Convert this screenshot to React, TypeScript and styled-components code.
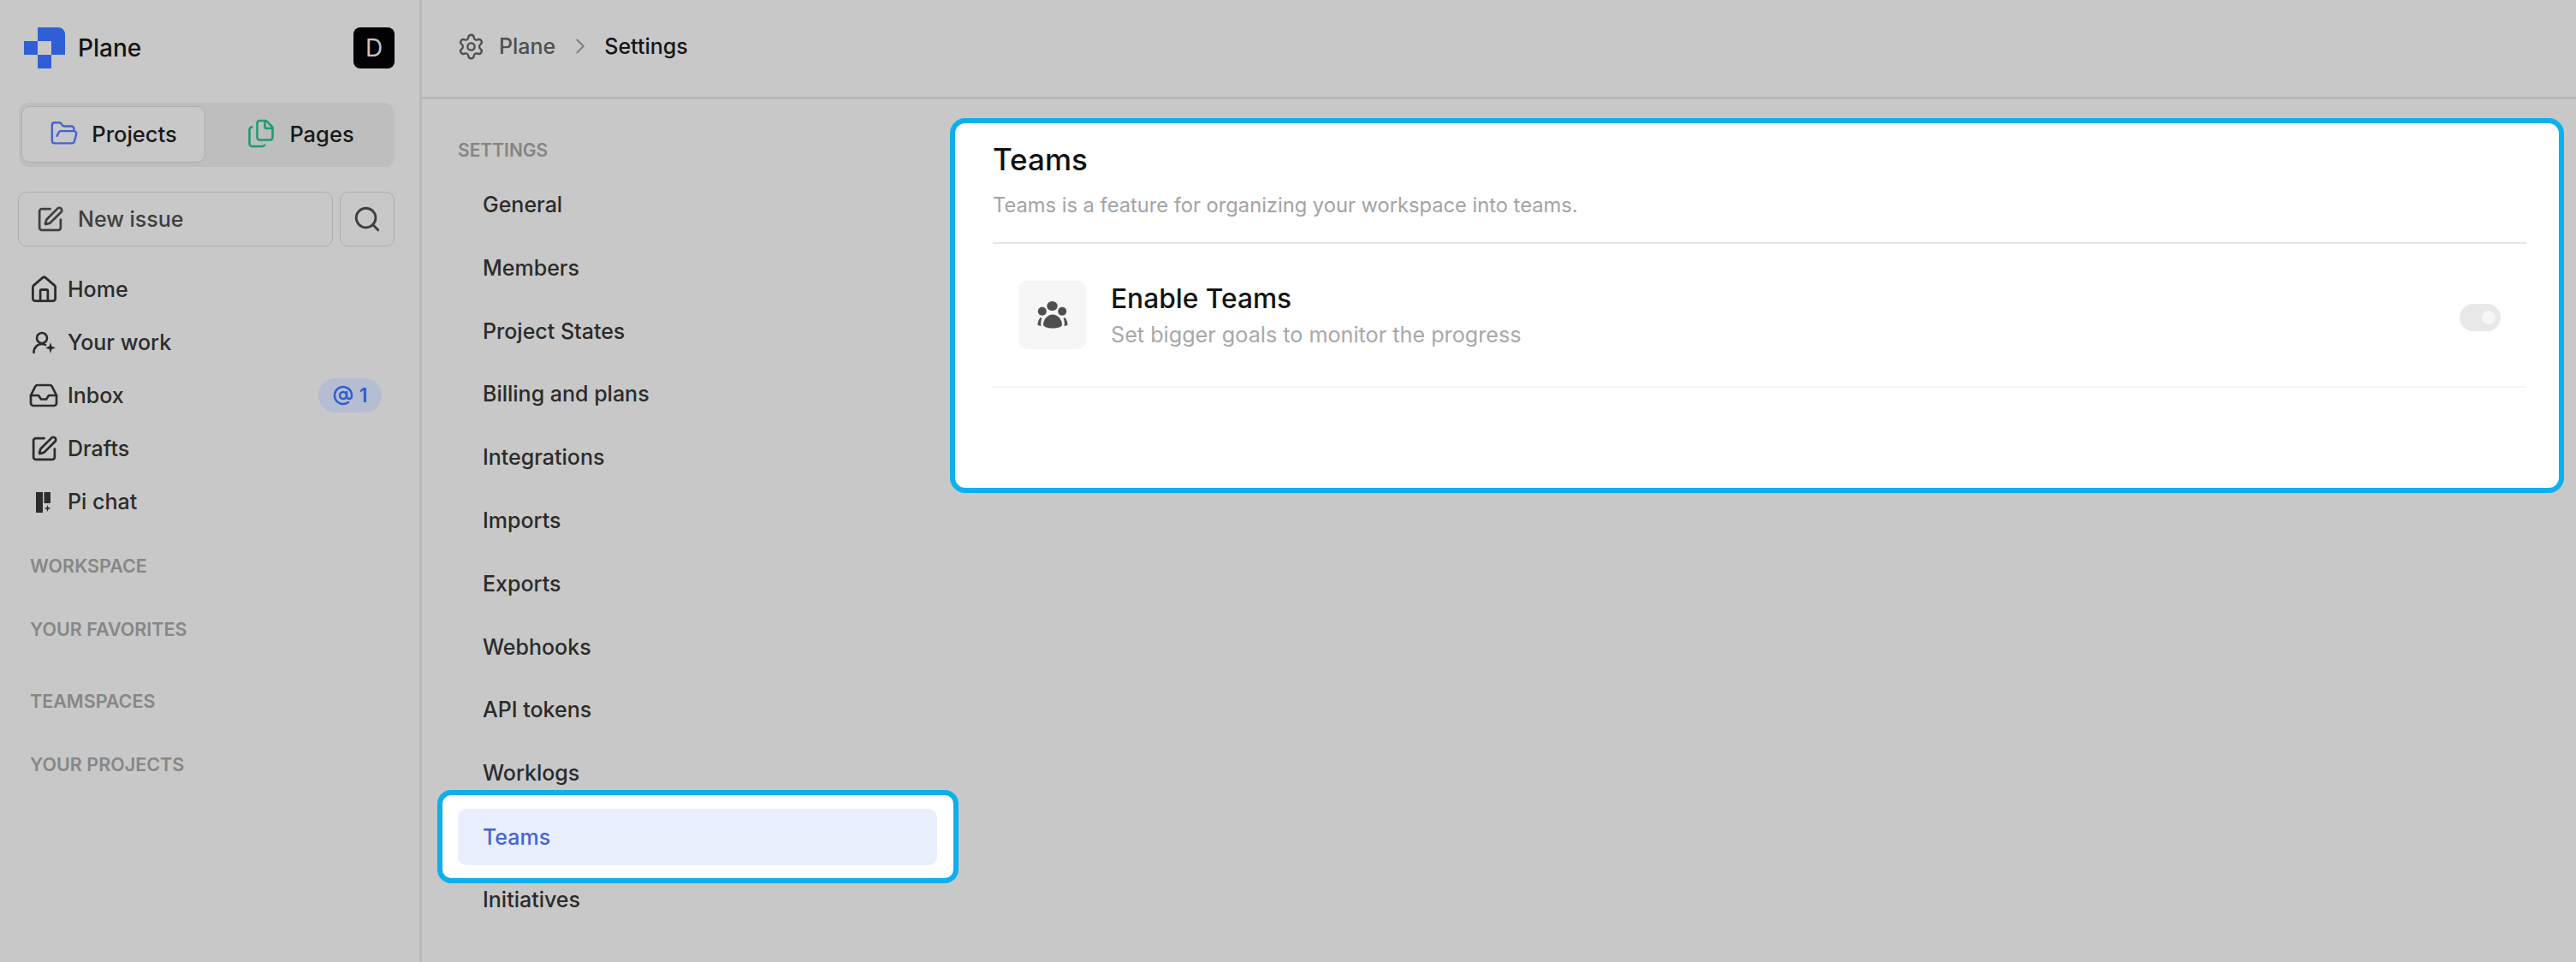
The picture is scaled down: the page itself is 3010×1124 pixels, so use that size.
import React from "react";
import styled, { createGlobalStyle } from "styled-components";
import { FolderOpen, Files, Search, SquarePen, House, Inbox, Settings, ChevronRight, AtSign } from "lucide-react";

const Global = createGlobalStyle`
  html, body { margin: 0; padding: 0; background: #c8c8c8; }
  body { font-family: Inter, "Liberation Sans", sans-serif; overflow: hidden; }
  * { box-sizing: border-box; }
  svg { flex-shrink: 0; }
`;

const Page = styled.div`
  display: flex;
  width: 3010px;
  height: 1124px;
  background: #c8c8c8;
  color: #1d1d1d;
  overflow: hidden;
`;

const Sidebar = styled.aside`
  flex: 0 0 493px;
  border-right: 3px solid #b9b9b9;
  padding-top: 32px;
  display: flex;
  flex-direction: column;
`;

const SidebarHeader = styled.div`
  display: flex;
  align-items: center;
  justify-content: space-between;
  height: 48px;
  padding: 0 29px 0 28px;
`;

const Brand = styled.div`
  display: flex;
  align-items: center;
  gap: 15px;
  font-size: 28px;
  font-weight: 500;
  color: #141414;
`;

const Avatar = styled.div`
  width: 48px;
  height: 48px;
  border-radius: 8px;
  background: #020205;
  color: #c4c4c4;
  font-size: 28px;
  display: flex;
  align-items: center;
  justify-content: center;
`;

const Tabs = styled.div`
  display: flex;
  height: 75px;
  margin: 40px 29px 0 22px;
  padding: 4px 0 5px 3px;
  border-radius: 12px;
  background: #bebebe;
`;

const Tab = styled.div<{ $active?: boolean }>`
  flex: ${(p) => (p.$active ? "0 0 215px" : "1")};
  display: flex;
  align-items: center;
  justify-content: center;
  gap: 15px;
  padding-bottom: 2px;
  font-size: 25.5px;
  font-weight: 500;
  color: #191919;
  border-radius: 10px;
  background: ${(p) => (p.$active ? "#c8c8c8" : "transparent")};
  border: ${(p) => (p.$active ? "1.5px solid #aeaeae" : "none")};
`;

const Actions = styled.div`
  display: flex;
  gap: 8px;
  margin-top: 29px;
  padding: 0 29px 0 21px;
`;

const ActionButton = styled.div<{ $square?: boolean }>`
  height: 64px;
  display: flex;
  align-items: center;
  gap: 16px;
  border: 1.5px solid #adadad;
  border-radius: 10px;
  color: #3f3f3f;
  font-size: 25px;
  font-weight: 500;
  ${(p) => (p.$square ? "flex: 0 0 64px; justify-content: center;" : "flex: 1; padding-left: 20px;")}
`;

const Nav = styled.nav`
  display: flex;
  flex-direction: column;
  margin-top: 19px;
`;

const NavItem = styled.div`
  height: 62px;
  display: flex;
  align-items: center;
  gap: 13px;
  padding: 0 44px 0 36px;
  font-size: 25px;
  font-weight: 450;
  color: #2c2c2c;
`;

const NavIcon = styled.span`
  flex: 0 0 30px;
  min-width: 0;
  display: flex;
  align-items: center;
  justify-content: center;
`;

const Badge = styled.span`
  margin-left: auto;
  height: 40px;
  width: 74px;
  display: flex;
  align-items: center;
  justify-content: center;
  gap: 7px;
  border-radius: 20px;
  background: #b5bdd2;
  color: #2f5fd0;
  font-size: 23px;
  font-weight: 600;
`;

const Groups = styled.div`
  display: flex;
  flex-direction: column;
  padding: 0 35px;
  margin-top: 31px;
`;

const GroupLabel = styled.div<{ $gap: number }>`
  height: 26px;
  line-height: 26px;
  margin-bottom: ${(p) => p.$gap}px;
  font-size: 21.500px;
  font-weight: 600;
  color: #878787;
`;

const Main = styled.main`
  flex: 1;
  min-width: 0;
  display: flex;
  flex-direction: column;
`;

const TopBar = styled.header`
  flex: 0 0 116px;
  border-bottom: 3px solid #b9b9b9;
  display: flex;
  align-items: center;
  padding: 0 0 5px 41px;
  font-size: 25px;
  font-weight: 450;
`;

const Crumb = styled.span<{ $current?: boolean }>`
  color: ${(p) => (p.$current ? "#161616" : "#505050")};
`;

const CrumbGear = styled.span`
  display: flex;
  margin-right: 16px;
  color: #505050;
`;

const CrumbChevron = styled.span`
  display: flex;
  margin: 0 13px 0 14px;
  color: #808080;
`;

const Body = styled.div`
  flex: 1;
  display: flex;
  min-height: 0;
`;

const SettingsNav = styled.div`
  flex: 0 0 617px;
  min-width: 0;
  display: flex;
  flex-direction: column;
  padding: 46px 0 0 42px;
`;

const SettingsTitle = styled.div`
  height: 28px;
  line-height: 28px;
  font-size: 21px;
  font-weight: 600;
  color: #858585;
  margin-bottom: 16px;
`;

const SettingsItem = styled.div<{ $active?: boolean }>`
  height: 66px;
  width: 560px;
  flex: 0 0 66px;
  margin-bottom: ${(p) => (p.$active ? 0 : "7.8px")};
  padding-left: 29px;
  display: flex;
  align-items: center;
  border-radius: 10px;
  font-size: 25px;
  font-weight: 450;
  color: ${(p) => (p.$active ? "#4563d8" : "#2b2b2b")};
  background: ${(p) => (p.$active ? "#e9effd" : "transparent")};
`;

/* Annotation frame drawn around the active row; negative margins keep the row in the list rhythm. */
const ActiveFrame = styled.div`
  flex: 0 0 auto;
  width: 609px;
  margin: -21px 0 -14.200px -24px;
  padding: 16px 19px 15px 18px;
  background: #fff;
  border: 6px solid #0bb0ee;
  border-radius: 16px;
`;

const Card = styled.section`
  margin-top: 22px;
  width: 1886px;
  height: 438px;
  flex: 0 0 auto;
  background: #fff;
  border: 6px solid #0bb0ee;
  border-radius: 18px;
  padding: 20px 38px 0 44px;
`;

const Title = styled.h1`
  margin: 0;
  font-size: 35px;
  line-height: 44px;
  font-weight: 500;
  color: #111;
`;

const Description = styled.p`
  margin: 14px 0 0;
  font-size: 23.700px;
  line-height: 36px;
  color: #a3a3a3;
  padding-bottom: 25px;
  border-bottom: 2px solid #e5e5e5;
`;

const FeatureRow = styled.div`
  display: flex;
  align-items: center;
  height: 168px;
  padding: 0 30px 0 30px;
  border-bottom: 2px solid #f5f5f5;
`;

const FeatureIcon = styled.div`
  flex: 0 0 79px;
  height: 80px;
  display: flex;
  align-items: center;
  justify-content: center;
  border-radius: 10px;
  background: #f6f6f6;
`;

const FeatureText = styled.div`
  flex: 1;
  margin-left: 29px;
`;

const FeatureName = styled.div`
  font-size: 31.700px;
  line-height: 42px;
  font-weight: 500;
  color: #141414;
`;

const FeatureHint = styled.div`
  margin-top: 3px;
  font-size: 25.200px;
  line-height: 36px;
  color: #a8a8a8;
`;

const Toggle = styled.div`
  width: 48px;
  height: 32px;
  margin-top: 5px;
  border-radius: 16px;
  background: #e8e8e8;
  display: flex;
  align-items: center;
  justify-content: flex-end;
  padding-right: 6px;
`;

const Knob = styled.span`
  width: 16px;
  height: 16px;
  border-radius: 50%;
  background: #f6f6f6;
`;

const Logo = () => (
  <svg width="48" height="48" viewBox="0 0 48 48" fill="#2f5fd6">
    <path d="M16 0h24a8 8 0 0 1 8 8v24H32V16H16z" />
    <rect x="0" y="16" width="16" height="16" />
    <rect x="16" y="32" width="16" height="16" />
  </svg>
);

const YourWorkIcon = () => (
  <svg width="27" height="26" viewBox="0 0 27 26" fill="none" stroke="#2c2c2c" strokeWidth="2.600" strokeLinecap="round">
    <circle cx="11" cy="8" r="6" />
    <path d="M1.500 25c0-6 4-10 9.500-10 2 0 3 .3 4 1" />
    <path d="M21 13l1.500 4.500L27 19.500l-4.500 1.500L21 26l-1.500-5-4.500-1.500 4.500-2z" fill="#2c2c2c" stroke="none" />
  </svg>
);

const PiIcon = () => (
  <svg width="20" height="25" viewBox="0 0 20 25" fill="#2c2c2c">
    <rect x="1" y="1" width="8" height="24" />
    <path d="M10.500 1H18v12a1 1 0 0 1-1 1h-6.500z" />
    <path d="M14.500 16l1 3 3 1-3 1-1 3-1-3-3-1 3-1z" />
  </svg>
);

const TeamIcon = () => (
  <svg width="36" height="32" viewBox="0 0 36 32" fill="#4f4f4f">
    <ellipse cx="17.500" cy="5.500" rx="6.200" ry="5.500" />
    <circle cx="5.800" cy="11.700" r="5" />
    <circle cx="29.200" cy="11.700" r="5" />
    <path d="M18 15.500c6 0 11 6 11 11.500 0 3-5 4.500-11 4.500S7 30 7 27c0-5.500 5-11.500 11-11.500z" />
    <path d="M3.500 19C1.500 21.500.5 24.500.5 28l4 1C4 25.500 4 22.500 5.500 20zM32.500 19c2 2.500 3 5.500 3 9l-4 1c.5-3.500.5-6.500-1-9z" />
  </svg>
);

const settingsItems = [
  "General", "Members", "Project States", "Billing and plans", "Integrations", "Imports",
  "Exports", "Webhooks", "API tokens", "Worklogs", "Teams", "Initiatives",
];

export default function App() {
  return (
    <Page>
      <Global />
      <Sidebar>
        <SidebarHeader>
          <Brand><Logo />Plane</Brand>
          <Avatar>D</Avatar>
        </SidebarHeader>
        <Tabs>
          <Tab $active><FolderOpen size={34} color="#4563cf" strokeWidth={1.7} />Projects</Tab>
          <Tab><Files size={36} color="#1f9a72" strokeWidth={1.7} />Pages</Tab>
        </Tabs>
        <Actions>
          <ActionButton><SquarePen size={33} strokeWidth={2} />New issue</ActionButton>
          <ActionButton $square><Search size={34} strokeWidth={2} /></ActionButton>
        </Actions>
        <Nav>
          <NavItem><NavIcon><House size={35} strokeWidth={1.9} /></NavIcon>Home</NavItem>
          <NavItem><NavIcon><YourWorkIcon /></NavIcon>Your work</NavItem>
          <NavItem>
            <NavIcon><Inbox size={36} strokeWidth={1.8} /></NavIcon>Inbox
            <Badge><AtSign size={24} strokeWidth={2.5} />1</Badge>
          </NavItem>
          <NavItem><NavIcon><SquarePen size={33} strokeWidth={2} /></NavIcon>Drafts</NavItem>
          <NavItem><NavIcon><PiIcon /></NavIcon>Pi chat</NavItem>
        </Nav>
        <Groups>
          <GroupLabel $gap={48}>WORKSPACE</GroupLabel>
          <GroupLabel $gap={58}>YOUR FAVORITES</GroupLabel>
          <GroupLabel $gap={48}>TEAMSPACES</GroupLabel>
          <GroupLabel $gap={0}>YOUR PROJECTS</GroupLabel>
        </Groups>
      </Sidebar>
      <Main>
        <TopBar>
          <CrumbGear><Settings size={33} strokeWidth={1.7} /></CrumbGear>
          <Crumb>Plane</Crumb>
          <CrumbChevron><ChevronRight size={30} strokeWidth={1.6} /></CrumbChevron>
          <Crumb $current>Settings</Crumb>
        </TopBar>
        <Body>
          <SettingsNav>
            <SettingsTitle>SETTINGS</SettingsTitle>
            {settingsItems.map((item) =>
              item === "Teams" ? (
                <ActiveFrame key={item}>
                  <SettingsItem $active>{item}</SettingsItem>
                </ActiveFrame>
              ) : (
                <SettingsItem key={item}>{item}</SettingsItem>
              )
            )}
          </SettingsNav>
          <Card>
            <Title>Teams</Title>
            <Description>Teams is a feature for organizing your workspace into teams.</Description>
            <FeatureRow>
              <FeatureIcon><TeamIcon /></FeatureIcon>
              <FeatureText>
                <FeatureName>Enable Teams</FeatureName>
                <FeatureHint>Set bigger goals to monitor the progress</FeatureHint>
              </FeatureText>
              <Toggle><Knob /></Toggle>
            </FeatureRow>
          </Card>
        </Body>
      </Main>
    </Page>
  );
}
